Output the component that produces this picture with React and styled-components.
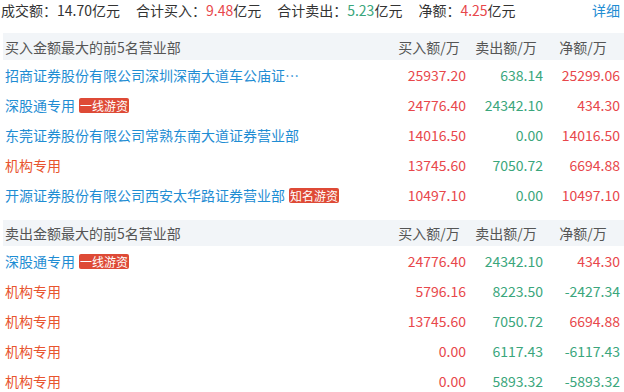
import React from 'react'
import styled, { createGlobalStyle } from 'styled-components'

const GlobalStyle = createGlobalStyle`
  body {
    margin: 0;
    background: #fff;
    font-family: "Noto Sans CJK SC", "Noto Sans", sans-serif;
    font-size: 14px;
    color: #333;
  }
`

const RED = '#e8474b'
const GREEN = '#3aa67c'
const BLUE = '#1f8dd3'
const ORANGE = '#e8552f'

const Page = styled.div`
  width: 624px;
  height: 392px;
  overflow: hidden;
`
const Summary = styled.div`
  display: flex;
  align-items: center;
  height: 21px;
  padding: 0 4px 0 1px;
  margin-bottom: 12px;
  line-height: 21px;
`
const Stat = styled.span`
  margin-right: 16px;
  white-space: nowrap;
`
const Value = styled.span`
  color: ${props => props.color || '#333'};
`
const More = styled.a`
  margin-left: auto;
  color: ${BLUE};
  text-decoration: none;
`
const Section = styled.div`
  margin-left: 3px;
  & + & {
    margin-top: 10px;
  }
`
const Grid = styled.div`
  display: grid;
  grid-template-columns: 1fr 77px 77px 77px;
  align-items: center;
  padding: 0 4px 0 2px;
  height: ${props => props.h}px;
`
const Head = styled(Grid)`
  background: #f2f5f8;
  color: #555;
`
const HeadCell = styled.div`
  text-align: center;
  padding-left: 3px;
`
const NameCell = styled.div`
  display: flex;
  align-items: center;
  min-width: 0;
`
const Name = styled.a`
  color: ${props => (props.inst ? ORANGE : BLUE)};
  text-decoration: none;
  max-width: 300px;
  white-space: nowrap;
  overflow: hidden;
  text-overflow: ellipsis;
`
const Badge = styled.span`
  margin-left: 4px;
  padding: 0 1px;
  background: #de4a36;
  color: #fff;
  font-size: 12px;
  line-height: 15px;
  border-radius: 2px;
  white-space: nowrap;
`
const Num = styled.div`
  text-align: right;
  color: ${props => props.color};
`

const colorOf = v => (parseFloat(v) < 0 ? GREEN : RED)

const buyRows = [
  { name: '招商证券股份有限公司深圳深南大道车公庙证券营业部', buy: '25937.20', sell: '638.14', net: '25299.06' },
  { name: '深股通专用', tag: '一线游资', buy: '24776.40', sell: '24342.10', net: '434.30' },
  { name: '东莞证券股份有限公司常熟东南大道证券营业部', buy: '14016.50', sell: '0.00', net: '14016.50' },
  { name: '机构专用', inst: true, buy: '13745.60', sell: '7050.72', net: '6694.88' },
  { name: '开源证券股份有限公司西安太华路证券营业部', tag: '知名游资', buy: '10497.10', sell: '0.00', net: '10497.10' }
]

const sellRows = [
  { name: '深股通专用', tag: '一线游资', buy: '24776.40', sell: '24342.10', net: '434.30' },
  { name: '机构专用', inst: true, buy: '5796.16', sell: '8223.50', net: '-2427.34' },
  { name: '机构专用', inst: true, buy: '13745.60', sell: '7050.72', net: '6694.88' },
  { name: '机构专用', inst: true, buy: '0.00', sell: '6117.43', net: '-6117.43' },
  { name: '机构专用', inst: true, buy: '0.00', sell: '5893.32', net: '-5893.32' }
]

const Table = ({ title, rows, headH }) => (
  <Section>
    <Head h={headH}>
      <div>{title}</div>
      <HeadCell>买入额/万</HeadCell>
      <HeadCell>卖出额/万</HeadCell>
      <HeadCell>净额/万</HeadCell>
    </Head>
    {rows.map((r, i) => (
      <Grid h={30} key={i}>
        <NameCell>
          <Name inst={r.inst} title={r.name}>{r.name}</Name>
          {r.tag && <Badge>{r.tag}</Badge>}
        </NameCell>
        <Num color={RED}>{r.buy}</Num>
        <Num color={GREEN}>{r.sell}</Num>
        <Num color={colorOf(r.net)}>{r.net}</Num>
      </Grid>
    ))}
  </Section>
)

export default function App () {
  return (
    <Page>
      <GlobalStyle />
      <Summary>
        <Stat>成交额：<Value>14.70</Value>亿元</Stat>
        <Stat>合计买入：<Value color={RED}>9.48</Value>亿元</Stat>
        <Stat>合计卖出：<Value color={GREEN}>5.23</Value>亿元</Stat>
        <Stat>净额：<Value color={RED}>4.25</Value>亿元</Stat>
        <More>详细</More>
      </Summary>
      <Table title='买入金额最大的前5名营业部' rows={buyRows} headH={27} />
      <Table title='卖出金额最大的前5名营业部' rows={sellRows} headH={26} />
    </Page>
  )
}
